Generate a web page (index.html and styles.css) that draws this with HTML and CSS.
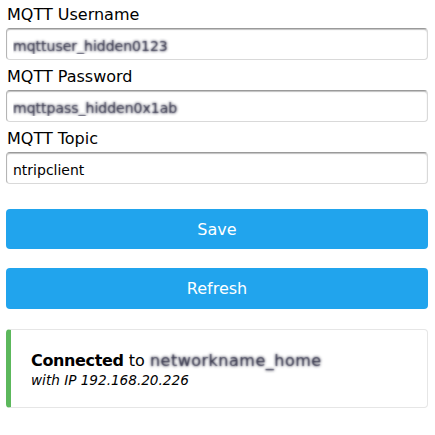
FILE: index.html
```html
<!DOCTYPE html>
<html>
<head>
<meta charset="utf-8">
<link rel="stylesheet" href="styles.css">
</head>
<body>
<div class="page">
  <label class="label">MQTT Username</label>
  <input class="field obscured" type="text" value="mqttuser_hidden0123">
  <label class="label">MQTT Password</label>
  <input class="field obscured" type="text" value="mqttpass_hidden0x1ab">
  <label class="label">MQTT Topic</label>
  <input class="field" type="text" value="ntripclient">
  <button class="btn btn-save">Save</button>
  <button class="btn btn-refresh">Refresh</button>
  <div class="card">
    <div class="status"><b>Connected</b> to <span class="hidden-name">networkname_home</span></div>
    <div class="ip">with IP 192.168.20.226</div>
  </div>
</div>
</body>
</html>
```
FILE: styles.css
```css
html, body {
  margin: 0;
  padding: 0;
  background: #ffffff;
}
body {
  font-family: "DejaVu Sans", Verdana, sans-serif;
  color: #000;
}
.page {
  display: flex;
  flex-direction: column;
  padding: 5px 7px 0 6px;
}
.label {
  display: block;
  font-size: 16px;
  line-height: 19px;
  margin: 0 0 4px 1px;
}
.field {
  box-sizing: border-box;
  width: 100%;
  height: 32px;
  margin: 0 0 7px 0;
  padding: 5px 6px 1px 6px;
  font-family: "DejaVu Sans", Verdana, sans-serif;
  font-size: 14px;
  color: #000;
  border: 1px solid #d9d9d9;
  border-top-color: #9a9a9a;
  border-left-color: #b5b5b5;
  border-radius: 4px;
  box-shadow: inset 0 1px 1px rgba(0, 0, 0, 0.25);
  background: #fff;
  outline: none;
}
.obscured {
  color: transparent;
  text-shadow: 0 0 3px rgba(20, 20, 40, 0.95), 0 0 1px rgba(60, 60, 90, 0.6);
}
.btn {
  display: block;
  width: 100%;
  height: 40px;
  border: none;
  border-radius: 4px;
  background: #21a4ed;
  color: #fff;
  font-family: "DejaVu Sans", Verdana, sans-serif;
  font-size: 16px;
  padding: 0;
}
.btn-save {
  margin-top: 18px;
}
.btn-refresh {
  margin-top: 19px;
  height: 41px;
}
.card {
  box-sizing: border-box;
  margin-top: 20px;
  height: 79px;
  padding: 21px 16px 18px 20px;
  border: 1px solid #e6e6e6;
  border-left: 5px solid #5cb85c;
  border-radius: 4px;
  background: #fff;
}
.status {
  font-size: 16px;
  line-height: 20px;
}
.status b {
  letter-spacing: -0.35px;
}
.hidden-name {
  color: transparent;
  text-shadow: 0 0 3px rgba(20, 20, 40, 0.95), 0 0 1px rgba(60, 60, 90, 0.6);
  letter-spacing: 0.5px;
}
.ip {
  font-size: 13.6px;
  line-height: 18px;
  font-style: italic;
}
```
